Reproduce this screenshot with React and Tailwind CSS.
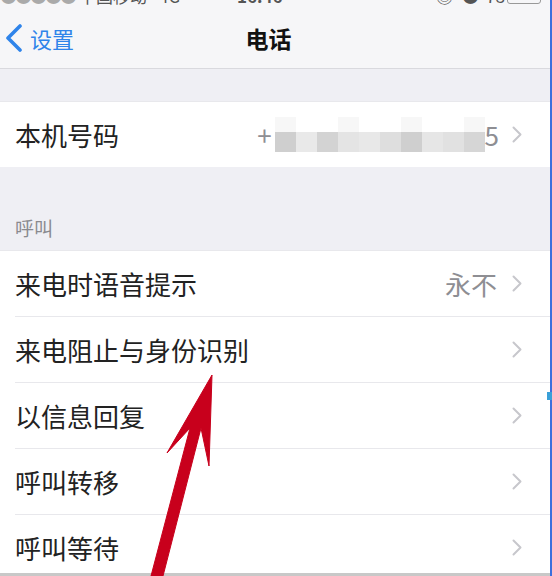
import React from 'react'

const rows = [
    { label: '来电时语音提示', value: '永不' },
    { label: '来电阻止与身份识别' },
    { label: '以信息回复' },
    { label: '呼叫转移' },
    { label: '呼叫等待' },
]

const blocks = ['#cfcfcf', '#e9e9e9', '#d3d3d3', '#e4e4e4', '#e8e8e8', '#dedede', '#cfcfcf', '#e6e6e6', '#e1e1e1', '#d6d6d6']

const Chevron = () => (
    <svg width="10" height="17" viewBox="0 0 10 17" className="shrink-0">
        <path d="M1.5 1.5 L8.5 8.5 L1.5 15.5" fill="none" stroke="#c7c7cc" strokeWidth="2" strokeLinecap="round" strokeLinejoin="round" />
    </svg>
)

const Row = ({ label, value }) => (
    <div className="bg-white pl-[15px]">
        <div className="h-[66px] flex items-center pr-[28px] border-b border-[#e8e8ec]">
            <span className="flex-1 text-[26px] leading-[34px] text-[#222]">{label}</span>
            {value && <span className="text-[26px] leading-[34px] text-[#8e8e93] mr-[15px]">{value}</span>}
            <Chevron />
        </div>
    </div>
)

export default function App() {
    return (
        <div className="relative w-[552px] h-[576px] overflow-hidden flex bg-[#efeff4]" style={{ fontFamily: '"Noto Sans CJK SC", "Noto Sans", sans-serif' }}>
            <div className="relative flex-1 h-[576px] overflow-hidden min-w-0">
                {/* Status bar (cut off at top) */}
                <div className="relative h-[7px] overflow-hidden bg-[#f6f6f8]">
                    <div className="absolute top-[-14px] left-0 right-0 flex items-center text-[17px] leading-[20px] text-[#555]">
                        <span className="tracking-[-2px] text-[#aaa]">●●●●●</span>
                        <span className="ml-[4px]">中国移动</span>
                        <span className="ml-[12px]">4G</span>
                        <span className="absolute left-[237px] font-semibold">16:46</span>
                        <span className="absolute left-[436px]">◎</span>
                        <span className="absolute left-[462px]">●</span>
                        <span className="absolute left-[486px]">78</span>
                        <span className="absolute left-[507px] top-[2px] w-[34px] h-[16px] border border-[#999] rounded-[3px]" />
                    </div>
                </div>

                {/* Nav bar */}
                <div className="relative h-[62px] bg-[#f6f6f8] border-b border-[#d9d9de] flex items-center">
                    <div className="flex items-center pl-[4px]">
                        <svg width="20" height="28" viewBox="0 0 20 28">
                            <path d="M16 2 L4 14 L16 26" fill="none" stroke="#2f84ea" strokeWidth="3.6" strokeLinecap="round" strokeLinejoin="round" />
                        </svg>
                        <span className="ml-[6px] text-[22px] leading-[30px] text-[#2f84ea]">设置</span>
                    </div>
                    <span className="absolute left-0 right-0 text-center text-[23px] leading-[30px] font-semibold text-[#111] pr-[13px]">电话</span>
                </div>

                <div className="h-[32px]" />

                {/* My number */}
                <div className="bg-white border-t border-[#e8e8ec]">
                    <div className="h-[65px] flex items-center pl-[15px] pr-[28px]">
                        <span className="flex-1 text-[26px] leading-[34px] text-[#222]">本机号码</span>
                        <span className="text-[26px] leading-[34px] text-[#8e8e93]">+</span>
                        <div className="flex flex-col ml-[3px]">
                            <div className="flex h-[15px]">
                                {blocks.map((c, i) => (
                                    <div key={i} className={`w-[21px] ${i % 3 === 0 ? 'bg-[#f7f7f7]' : 'bg-white'}`} />
                                ))}
                            </div>
                            <div className="flex h-[20px]">
                                {blocks.map((c, i) => (
                                    <div key={i} className="w-[21px]" style={{ background: c }} />
                                ))}
                            </div>
                        </div>
                        <span className="text-[26px] leading-[34px] text-[#8e8e93] mr-[13px]">5</span>
                        <Chevron />
                    </div>
                </div>

                {/* Section header */}
                <div className="h-[84px] flex items-end pl-[15px] pb-[9px] border-b border-[#e8e8ec]">
                    <span className="text-[19px] leading-[26px] text-[#8a8a8f]">呼叫</span>
                </div>

                {rows.map((r) => (
                    <Row key={r.label} label={r.label} value={r.value} />
                ))}

                <div className="absolute left-0 right-0 bottom-0 h-[3px] bg-[#c8c8c8]" />
            </div>

            {/* right edge strip */}
            <div className="w-[2px] bg-[#3c6fdc]" />
            <div className="absolute left-[547px] top-[392px] w-[5px] h-[8px] bg-[#3aa0d8]" />

            {/* red annotation arrow */}
            <svg className="absolute inset-0 pointer-events-none" width="552" height="576" viewBox="0 0 552 576">
                <polygon
                    points="212,375 209,466 201,428 163,576 151,576 190,428 167,453"
                    fill="#c8001c"
                    stroke="#c8001c"
                    strokeWidth="1"
                    strokeLinejoin="round"
                />
            </svg>
        </div>
    )
}
